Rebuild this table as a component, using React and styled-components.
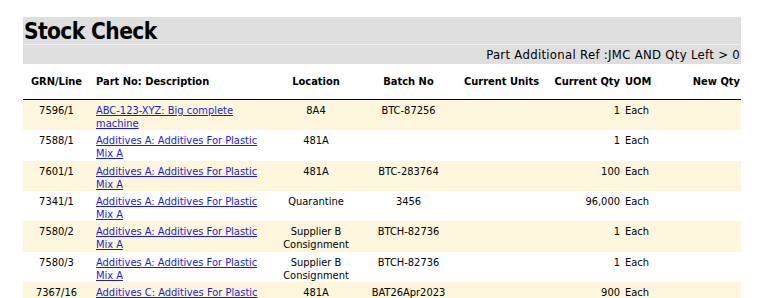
import React from "react";
import styled, { createGlobalStyle } from "styled-components";

const Global = createGlobalStyle`
  html, body { margin: 0; padding: 0; background: #fff; }
  body { font-family: "DejaVu Sans Condensed", "DejaVu Sans", sans-serif; font-size: 11px; color: #000; }
`;

const Page = styled.div`
  padding: 17px 21px 0 23px;
  width: 718px;
`;

const TitleBar = styled.div`
  background: #dedede;
  height: 27px;
  border-bottom: 1px solid #efefef;
  display: flex;
  align-items: center;
`;

const Title = styled.h1`
  margin: 1px 0 0 1px;
  font-size: 22.5px;
  font-weight: bold;
  letter-spacing: -0.6px;
  line-height: 27px;
`;

const FilterBar = styled.div`
  background: #dedede;
  height: 19px;
  display: flex;
  align-items: center;
  justify-content: flex-end;
  padding-right: 1px;
  font-size: 13px;
  letter-spacing: 0.3px;
`;

const Table = styled.table`
  width: 718px;
  border-collapse: collapse;
  table-layout: fixed;
`;

const Th = styled.th`
  height: 35px;
  padding: 0 ${(p) => p.$pr || 0}px 0 ${(p) => p.$pl || 0}px;
  text-align: ${(p) => p.$align || "center"};
  font-weight: bold;
  vertical-align: middle;
  border-bottom: 1px solid #000;
  white-space: nowrap;
`;

const Tr = styled.tr`
  background: ${(p) => (p.$alt ? "#fdf5dc" : "#fff")};
`;

const Td = styled.td`
  padding: 4px ${(p) => p.$pr || 0}px 0 ${(p) => p.$pl || 0}px;
  height: 26.33px;
  line-height: 13px;
  vertical-align: top;
  text-align: ${(p) => p.$align || "center"};
`;

const PartLink = styled.a`
  color: #1c1cd4;
  text-decoration: underline;
  display: inline-block;
  width: 172px;
`;

const cols = [
  { w: 67 },
  { w: 180 },
  { w: 92 },
  { w: 93 },
  { w: 93 },
  { w: 74 },
  { w: 38 },
  { w: 81 },
];

const rows = [
  ["7596/1", "ABC-123-XYZ: Big complete machine", "8A4", "BTC-87256", "1"],
  ["7588/1", "Additives A: Additives For Plastic Mix A", "481A", "", "1"],
  ["7601/1", "Additives A: Additives For Plastic Mix A", "481A", "BTC-283764", "100"],
  ["7341/1", "Additives A: Additives For Plastic Mix A", "Quarantine", "3456", "96,000"],
  ["7580/2", "Additives A: Additives For Plastic Mix A", "Supplier B Consignment", "BTCH-82736", "1"],
  ["7580/3", "Additives A: Additives For Plastic Mix A", "Supplier B Consignment", "BTCH-82736", "1"],
  ["7367/16", "Additives C: Additives For Plastic Mix C", "481A", "BAT26Apr2023", "900"],
];

export default function App() {
  return (
    <Page>
      <Global />
      <TitleBar>
        <Title>Stock Check</Title>
      </TitleBar>
      <FilterBar>Part Additional Ref :JMC AND Qty Left &gt; 0</FilterBar>
      <Table>
        <colgroup>
          {cols.map((c, i) => (
            <col key={i} style={{ width: c.w }} />
          ))}
        </colgroup>
        <thead>
          <tr>
            <Th>GRN/Line</Th>
            <Th $align="left" $pl={6}>Part No: Description</Th>
            <Th>Location</Th>
            <Th>Batch No</Th>
            <Th>Current Units</Th>
            <Th $align="right" $pr={2}>Current Qty</Th>
            <Th $align="left" $pl={3}>UOM</Th>
            <Th $align="right" $pr={1}>New Qty</Th>
          </tr>
        </thead>
        <tbody>
          {rows.map((r, i) => (
            <Tr key={i} $alt={i % 2 === 0}>
              <Td>{r[0]}</Td>
              <Td $align="left" $pl={6}>
                <PartLink href="#">{r[1]}</PartLink>
              </Td>
              <Td>{r[2]}</Td>
              <Td>{r[3]}</Td>
              <Td></Td>
              <Td $align="right" $pr={2}>{r[4]}</Td>
              <Td $align="left" $pl={3}>Each</Td>
              <Td></Td>
            </Tr>
          ))}
        </tbody>
      </Table>
    </Page>
  );
}
